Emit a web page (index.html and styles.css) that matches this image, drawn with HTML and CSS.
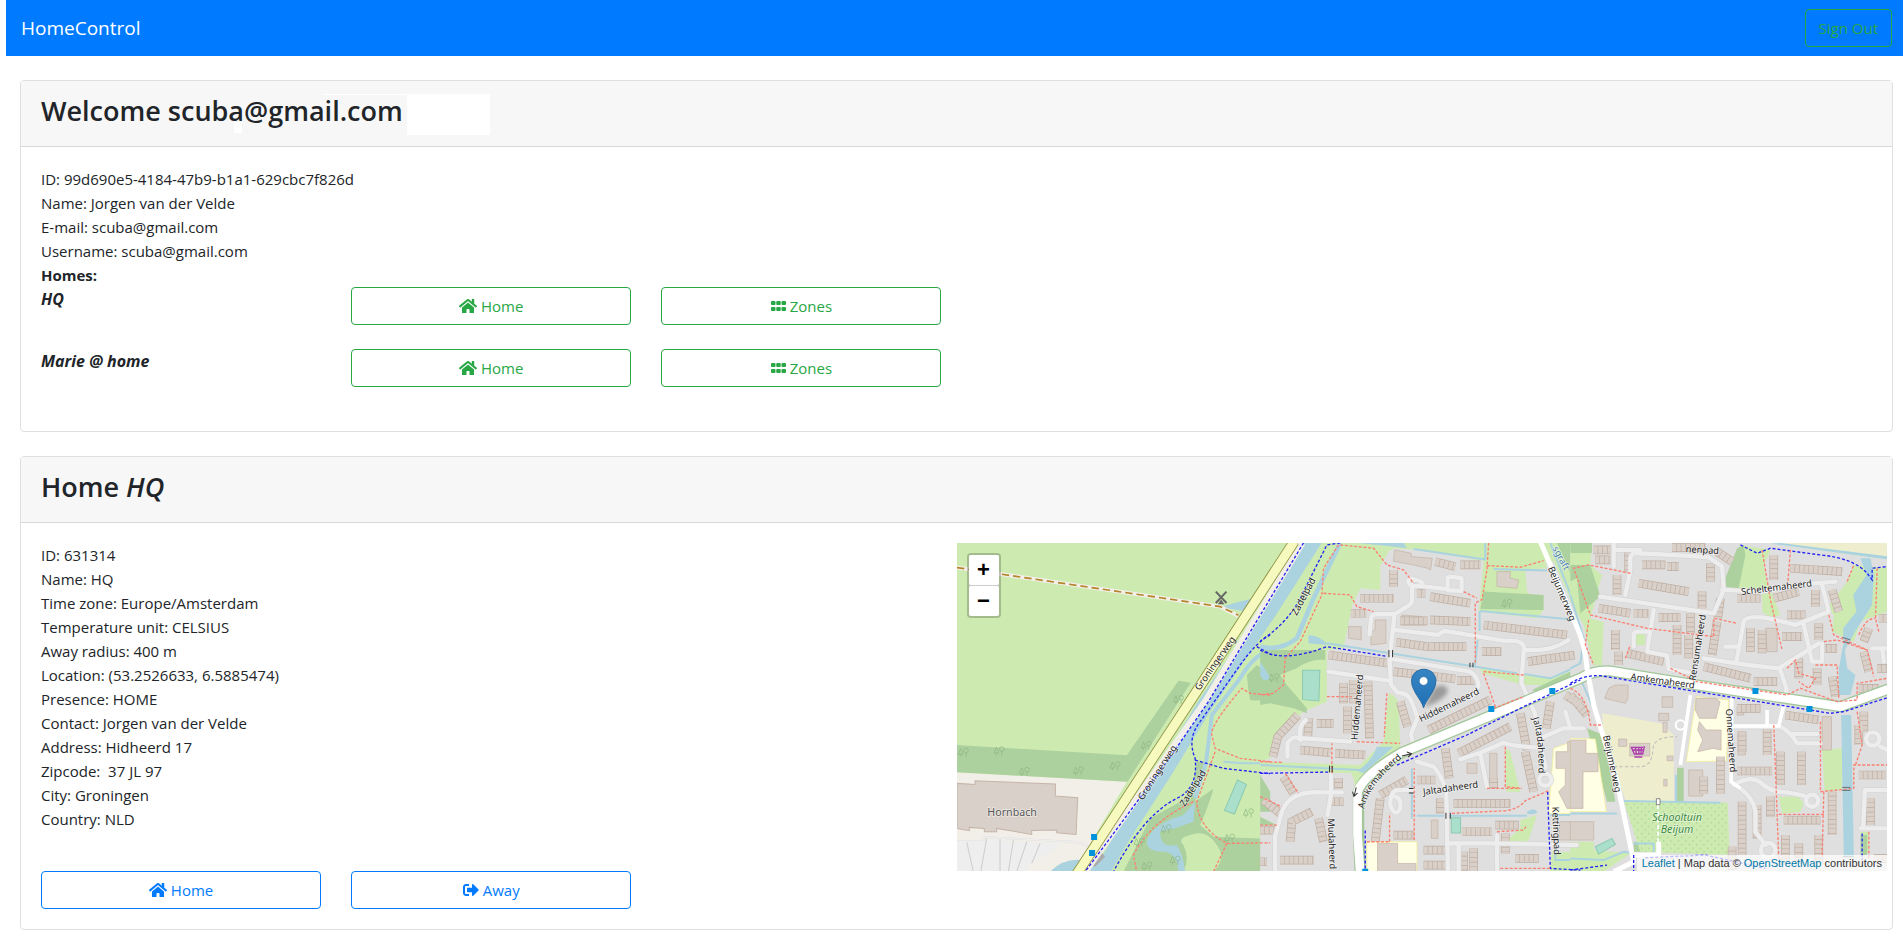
FILE: index.html
```
<!DOCTYPE html>
<html lang="en">
<head>
<meta charset="utf-8">
<title>HomeControl</title>
<link rel="stylesheet" href="styles.css">
</head>
<body>
<svg class="sprite" aria-hidden="true">
  <symbol id="i-home" viewBox="0 0 576 512"><path d="M280.37 148.26L96 300.11V464a16 16 0 0 0 16 16l112.06-.29a16 16 0 0 0 15.92-16V368a16 16 0 0 1 16-16h64a16 16 0 0 1 16 16v95.64a16 16 0 0 0 16 16.05L464 480a16 16 0 0 0 16-16V300L295.67 148.26a12.19 12.19 0 0 0-15.3 0zM571.6 251.47L488 182.56V44.05a12 12 0 0 0-12-12h-56a12 12 0 0 0-12 12v72.61L318.47 43a48 48 0 0 0-61 0L4.34 251.47a12 12 0 0 0-1.6 16.9l25.5 31A12 12 0 0 0 45.15 301l235.22-193.74a12.19 12.19 0 0 1 15.3 0L530.9 301a12 12 0 0 0 16.9-1.6l25.5-31a12 12 0 0 0-1.7-16.93z"/></symbol>
  <symbol id="i-grid" viewBox="0 0 15 16"><path d="M1 3h2.500a1 1 0 0 1 1 1v2a1 1 0 0 1-1 1H1a1 1 0 0 1-1-1V4a1 1 0 0 1 1-1zm5.250 0h2.500a1 1 0 0 1 1 1v2a1 1 0 0 1-1 1h-2.500a1 1 0 0 1-1-1V4a1 1 0 0 1 1-1zm5.250 0H14a1 1 0 0 1 1 1v2a1 1 0 0 1-1 1h-2.500a1 1 0 0 1-1-1V4a1 1 0 0 1 1-1zM1 9h2.500a1 1 0 0 1 1 1v2a1 1 0 0 1-1 1H1a1 1 0 0 1-1-1v-2a1 1 0 0 1 1-1zm5.250 0h2.500a1 1 0 0 1 1 1v2a1 1 0 0 1-1 1h-2.500a1 1 0 0 1-1-1v-2a1 1 0 0 1 1-1zm5.250 0H14a1 1 0 0 1 1 1v2a1 1 0 0 1-1 1h-2.500a1 1 0 0 1-1-1v-2a1 1 0 0 1 1-1z"/></symbol>
  <symbol id="i-away" viewBox="0 0 512 512"><path d="M497 273L329 441c-15 15-41 4.500-41-17v-96H152c-13.300 0-24-10.700-24-24v-96c0-13.300 10.700-24 24-24h136V88c0-21.400 25.900-32 41-17l168 168c9.300 9.400 9.300 24.600 0 34zM192 436v-40c0-6.600-5.400-12-12-12H96c-17.700 0-32-14.300-32-32V160c0-17.700 14.300-32 32-32h84c6.600 0 12-5.400 12-12V76c0-6.600-5.400-12-12-12H96c-53 0-96 43-96 96v192c0 53 43 96 96 96h84c6.600 0 12-5.400 12-12z"/></symbol>
</svg>

<nav class="navbar">
  <a class="brand" href="#">HomeControl</a>
  <button class="btn btn-green sign-out" type="button">Sign Out</button>
</nav>

<main class="content">
  <section class="card">
    <header class="card-header">
      <span class="mask"></span><span class="mask-line"></span><span class="mask-dot"></span>
      <h3>Welcome scuba@gmail.com</h3>
    </header>
    <div class="card-body">
      <div>ID: 99d690e5-4184-47b9-b1a1-629cbc7f826d</div>
      <div>Name: Jorgen van der Velde</div>
      <div>E-mail: scuba@gmail.com</div>
      <div>Username: scuba@gmail.com</div>
      <div><b>Homes:</b></div>
      <div class="row spaced">
        <b class="col2 home-name"><i>HQ</i></b>
        <div class="col2"><button class="btn btn-green block" type="button"><svg class="icon wide"><use href="#i-home"/></svg> Home</button></div>
        <div class="col2"><button class="btn btn-green block" type="button"><svg class="icon grid"><use href="#i-grid"/></svg> Zones</button></div>
      </div>
      <div class="row spaced">
        <b class="col2 home-name"><i>Marie @ home</i></b>
        <div class="col2"><button class="btn btn-green block" type="button"><svg class="icon wide"><use href="#i-home"/></svg> Home</button></div>
        <div class="col2"><button class="btn btn-green block" type="button"><svg class="icon grid"><use href="#i-grid"/></svg> Zones</button></div>
      </div>
    </div>
  </section>

  <section class="card">
    <header class="card-header"><h3>Home <i>HQ</i></h3></header>
    <div class="card-body">
      <div class="row">
        <div class="col6">
          <div>ID: 631314</div>
          <div>Name: HQ</div>
          <div>Time zone: Europe/Amsterdam</div>
          <div>Temperature unit: CELSIUS</div>
          <div>Away radius: 400 m</div>
          <div>Location: (53.2526633, 6.5885474)</div>
          <div>Presence: HOME</div>
          <div>Contact: Jorgen van der Velde</div>
          <div>Address: Hidheerd 17</div>
          <div>Zipcode: &nbsp;37 JL 97</div>
          <div>City: Groningen</div>
          <div>Country: NLD</div>
        </div>
        <div class="map">
          <svg class="tiles" viewBox="0 0 2790 984" preserveAspectRatio="xMidYMid slice" role="img" aria-label="Map of Beijum, Groningen">
            <defs>
              <pattern id="dots" width="22" height="22" patternUnits="userSpaceOnUse"><circle cx="5" cy="5" r="1.500" fill="#6fae5a"/><circle cx="16" cy="16" r="1.500" fill="#6fae5a"/></pattern>
              <linearGradient id="pin" x1="0" y1="0" x2="0" y2="1"><stop offset="0" stop-color="#3686c4"/><stop offset="1" stop-color="#1f6fb5"/></linearGradient>
              <g id="tree" fill="none" stroke="#8db382" stroke-width="2"><path d="M0 20L7 2L14 20ZM7 20v7M23 15v12"/><circle cx="23" cy="8" r="7"/></g>
              <g id="roads">
                <g class="west"><path d="M21 918h80v-12l230 12q60 0 80 14" stroke-width="5"/></g>
                <g class="mid">
                  <path d="M465 135q-25-12-20 10q5 12 40 8q5-15-20-18M455 150v48q0 10-20 20l-32 20h-55q-15 0-16 15l-4 45M470 152l85 10M562 130q0-5 10-5l32 5v38l-42-2ZM403 238l-15 135l4 75l20 25q35 0 45 35l15 40l-20 50l10 40M403 285l130 15l20-12l180 30q55-5 58 20l-8 105l40 90l15 85l18 80M205 410l180 27M392 372l215 34q40 0 48 45l-22 38M795 345q80 5 130-30M82 665v-40q20-30 40-10q-10-40 15-60M130 610l140 10M470 680l50 15q20 20 38 70l5 240M600 673l60-20l70-30q20 10 100 15M660 655l20 100M460 765h-50q-20 5-20 45q15 40 30 10q5-30-15-35M245 772h-60q-100-5-120 60l-20 70v110M212 720v60l-10 60M560 925h150l240 5M595 930v80M710 900v110M850 605l60-25h60M915 530l15 50"/>
                  <circle cx="855" cy="734" r="18" fill="none"/>
                </g>
                <g class="east">
                  <path d="M130 25v70M90 185l340 50l30-70l-5-70l-40-28l-60-4l-150-8q-25-5-25 20v30l-15 75M130 45h80M250 225l-20 125l60 12l5 40l60 10M190 335v-35q0-10 15-10h25M455 165l120 5l100-20l120-10M755 150l20 80l-100 40l-80-20q-70-10-75 10l-22 120M400 370l130 20l95 10l120-75M465 335h35M700 270l25 110h30v-55M628 400l20 60l-4 40M480 575h150q30 15 50 50h70M665 597h75M490 750q50-30 80-8q30 30 80 30l50 10M510 760q40 30 45 70v60l30 40M870 880h80M878 880l5-115h70M905 340h50M935 340l5 40M930 635l22 10"/>
                  <circle cx="593" cy="945" r="22" fill="none"/><circle cx="725" cy="797" r="18" fill="none"/><circle cx="907" cy="612" r="20" fill="none"/>
                </g>
              </g>
              <g id="houses">
                <g class="mid">
                  <path d="M300 190h100M272 235h46M420 258h82M510 255l120 5M408 322l102 14M510 335h108M205 360l180 25M400 410l90 10M490 420l95 12M590 437h52M670 270l250 30M665 350h58M803 380l140-20M250 445v60M280 435v70M323 440l5 170M262 515v80M38 665l15-60l60-65M120 645l90 8M225 655l90 5M145 550l-2 55M170 565h50M505 585l185-90M420 500l22 75M595 655l155-80M555 640l12 90M780 535l20 110M870 500l-12 80M915 480l50 30M470 735h55M360 780l80-45M345 920l15-130M580 805h170M605 890h90M705 870h70M490 945h65M490 990h65M610 950v60M640 940v70M735 895v60M765 970h70M90 920l5-60l60-30M175 850l15 70M60 975h100M0 980h20M70 725l30 50M10 795l50 40M0 885h45M400 900h60M795 650l25 120M470 175h25M510 185l120 20M600 90h60M525 80l60 15M400 105v50M540 790v45M700 730v30M235 730v30M210 800h40"/>
                </g>
                <g class="east">
                  <path d="M70 45h50M75 75h45M175 50v60M140 120v60M215 90h70M290 95h35M205 145l150 25M85 220l95 15M190 235h45M265 248h65M360 235v60M395 170v50M420 85v55M450 190l-8 60M440 260l-15 100M355 300v70M320 270v90M135 285v60M145 350v40M170 355l110 25M400 395l140 35M550 440h70M660 100l155 10M610 60v75M610 190l75-20M650 240h55M735 165v50M785 165l20 65M500 190h70M540 280v70M575 285v70M635 305h60M745 265v50M755 340h45M685 370v60M740 400v50M785 425l10 60M500 520h70M645 540l100 15M515 590v60M590 580v80M630 650v100M693 650v100M500 708h105M400 725v50M450 665v110M515 800v160M560 810v100M600 785v60M485 935v70M640 855h110M645 900v90M685 925v60M745 900v90M785 770v130M865 720h80M900 790v80M880 530v60M865 570v60M895 280l-15 40M880 350l15 60M865 460h60M0 480l50 60M440 50l45 30M305 38h100M925 250h28M920 400h30M910 970h40"/>
                </g>
              </g>
            </defs>

            <rect width="2790" height="984" fill="#cdebb0"/>

            <g class="west">
              <path fill="#f2efe9" d="M21 712L530 740L370 1010H21Z"/>
              <path fill="#eee" d="M21 925L100 915L330 925L300 955Q240 970 230 1010H21Z"/>
              <path fill="#add19e" d="M21 630L530 661L685 437L722 443L532 740L21 712ZM890 420L920 390L935 400Q960 380 965 350V490Q930 500 900 495L895 465Z"/>
              <path fill="#aad3df" d="M300 1010Q350 960 420 980L450 950L480 1010Z"/>
              <path class="bank" d="M1100 4L960 225L765 510L640 715L520 900L450 1020"/>
              <path fill="#add19e" d="M740 680h25l-8 30L735 800L790 760Q780 800 750 870L790 905L930 910V860L960 870V1010H520L600 850L690 800Q730 770 735 710Z"/>
              <path fill="#cdebb0" d="M700 930Q680 910 720 900Q770 880 800 930Q830 970 790 1010H700Q720 970 700 930Z"/>
              <path fill="#aad3df" d="M590 920Q600 870 700 840L735 800L730 860Q680 880 630 890Q630 940 680 930Q700 960 705 1010H685Q680 950 640 950Q590 950 590 920ZM850 205l70-18l-35 42l-75-12Z"/>
              <path class="water thin" d="M820 680l60 5h80"/>
              <path class="water stream" d="M960 345Q910 360 870 430L785 540L768 680L735 790"/>
              <path fill="#d9d0c9" stroke="#c5b5a8" stroke-width="3" d="M21 745L75 748V737L316 747V783L383 788L378 898L320 893V885L245 886V898L140 880V890H103V880L58 877V887L21 880Z"/>
              <path fill="#aae0cb" stroke="#8cc9b0" stroke-width="3" d="M862 735L889 748L853 837L823 826Z"/>
              <path class="hatch" d="M50 920l20 90M110 910l-18 100M150 910v100M190 915l-15 95M230 920l-30 90M270 925l-25 60"/>
              <path fill="#aaa" d="M450 945l15 20l-30 30l-25-10Z"/>
            </g>

            <g class="mid">
              <path fill="#dfdfdf" d="M385 50L400 40L480 45L680 80L880 80L960 260V1010H0V680L30 670L45 600L130 530L200 500V345L250 340L275 215L300 160L360 165V95Z"/>
              <path fill="#cdebb0" d="M665 24H840L860 100L795 105L800 170L850 225L830 250L655 230L670 80ZM385 475L400 480L415 500L420 640L460 650L290 770L275 715L0 705V680L300 690L370 620ZM735 640L750 650L780 770H738ZM780 855L830 840L800 930L735 920L780 880ZM660 400L790 420L870 430L960 400V410L880 450L790 450L665 415ZM330 925H352V1010H320ZM875 950H960V1010H870Z"/>
              <path fill="#add19e" d="M670 170L850 180V225L660 222ZM0 345H195V375Q150 370 110 400L60 420L80 450L140 520V535L100 520L30 505L0 510ZM890 24h70v130l-30-40ZM0 720l30 50v60H0ZM0 845l50 25H0ZM510 600L680 530L690 535L530 610ZM815 465l145-70v15l-130 65Z"/>
              <path fill="#ffffe5" stroke="#f4f08e" stroke-width="2" d="M320 920h150v90H320ZM880 640L960 612V835H865Z"/>
              <path class="water mid-w" d="M240 24L160 190L110 310Q60 350 0 335"/>
              <path fill="#aad3df" d="M145 300q30 0 60 30l-60-5ZM350 635h50l-90 80l-20-8q40-20 60-72ZM800 830q20-15 32 0q-10 12-32 5ZM0 380l20 30l10 20q-20 15-30-10ZM290 24h140l10 15Z"/>
              <path class="water thin" d="M200 325L770 415M460 42l215 32V24M700 102l160 5M660 228l300 28M658 228v60M652 315l-8 80M0 690l300 15M470 842h330M780 415l90 15l90-40M870 24l90 230M455 700v150M885 930v45h75M870 840h90"/>
              <path fill="#aae0cb" stroke="#8cc9b0" stroke-width="3" d="M127 406h52l-3 92l-49-4ZM573 848h28v46h-28Z"/>
              <g class="bldg"><path d="M403 45l50 10v10l63 5l-5 35l-12-6l-45-10l-54-10ZM710 110h40v20l25 5l-5 25l-60-5ZM345 255h32v70l-45 5v-40l13-5ZM265 275h38v40l-38-5ZM352 925h60v60h55v25H352ZM887 650h35v-30h38v200h-40l-25-50l20-20v-50h-28ZM896 860h64v55h-64ZM620 685h30v30h-30ZM688 655h22v80h-22ZM513 855h20v55h-20ZM425 240l60 5l10 25h-70Z"/></g>
            </g>

            <g class="east">
              <path fill="#dfdfdf" d="M0 24H951V1010H0Z"/>
              <path fill="#cdebb0" d="M0 24H65L60 90L95 120L60 250L100 262L95 392L68 390L40 270L0 200ZM510 30L600 45L580 90L590 140L630 240L600 250L575 230V170L455 155L500 60ZM850 90L951 100V230L870 260L850 320L785 290L790 240L770 220L830 140ZM190 295h34v35h-34ZM755 645L815 640V765L762 768ZM625 785h60l15 20l-10 25l-55 5ZM870 890h25v60h-20ZM0 920h70v25L180 955L100 1010H0Z"/>
              <path fill="#eeeecf" d="M590 24H951V75ZM95 535L270 565L310 600V800L165 795L100 610Z"/>
              <path fill="#add19e" d="M0 90h60l30 95l-60 50L20 130L0 140ZM500 40l20-10l5 30l-20 100l-50-5ZM0 24h65v30H0ZM50 580l50 20l35 200h-25ZM320 698h20v100h-20ZM190 920h70v30h-70ZM870 900h20v60h-20ZM105 396L380 440V450L105 405ZM400 455L560 465V475L400 470ZM670 485L810 500L951 455V465L810 512L670 498Z"/>
              <path fill="#ffffe5" stroke="#f4f08e" stroke-width="2" d="M378 485L475 495L468 678L348 680ZM0 610L75 612L108 830H0Z"/>
              <path fill="#cdebb0" d="M160 798L472 803L478 960L210 950Z"/><path fill="url(#dots)" d="M160 798L472 803L478 960L210 950Z"/>
              <path fill="#aad3df" d="M870 70h30l10 50l-5 90l-45 70l-40 70l-2-70l40-50l-10-50l40-60ZM820 320l10 80l25 20l-15 60h-35v-80ZM812 540h30l8 425h-30ZM630 24l320 40v10L600 26Z"/>
              <path class="water thin" d="M30 430L95 580L190 960M160 798l290 5M317 720v80M0 180L40 310L30 385L0 400M0 835h140M190 925l60 0v25M0 970l100 5l60-25l30 5"/>
              <g class="bldg"><path d="M115 460l20-10h38v40l-8 15l-62-15ZM275 485h32v32h-32ZM145 612h24v22h-24ZM178 625h60v38h-60ZM355 705h42v78h-42ZM377 490l60 0l12 10l-12 50h-50l-12-25ZM387 560l20 25h45v60l-25-5l-45 10l15-35l-15-30ZM755 545h28v100h-28ZM585 280h35v70h-30ZM0 615h47v40h36v55h-45v110H0ZM0 860h70v55H0ZM265 535h30v22h-30ZM278 562h12v30h-12ZM290 663h18v14h-18ZM280 733h10v20h-10ZM503 590h22v70h-22ZM500 515h20v25h-20Z"/></g>
              <path fill="#aae0cb" stroke="#8cc9b0" stroke-width="3" d="M75 935L125 910L135 928L85 957Z"/>
            </g>

            <use href="#houses" class="houses-edge"/>
            <use href="#houses" class="houses-fill"/>
            <use href="#roads" class="road-edge"/>
            <use href="#roads" class="road-fill"/>

            <g class="mid big-roads">
              <path class="case" d="M300 1010L295 900V770Q310 720 420 655L960 430Q1000 405 1050 408L1310 450L1740 515L1890 460"/>
              <path class="major" d="M300 1010L292 900V770Q310 720 420 655L960 430Q1000 405 1050 408L1310 450L1740 515L1890 460"/>
              <path class="major slim" d="M840 20L945 265Q975 330 980 400L1000 510L1070 740L1120 980L1060 1010M1120 960L1195 960V920"/>
              <path class="major small" d="M1414 490L1412 740L1440 760M1410 573H1555L1570 510M1520 525v45M1290 480L1260 690"/>
              <circle cx="1260" cy="570" r="14" fill="#dfdfdf" stroke="#fff" stroke-width="6"/>
            </g>
            <g class="west">
              <path d="M21 98L810 215L865 243" fill="none" stroke="#f2efe9" stroke-width="12"/>
              <path d="M21 98L810 215L865 241" fill="none" stroke="#b5852b" stroke-width="5" stroke-dasharray="22 12"/>
              <path d="M1056 24L765 500L405 1010" fill="none" stroke="#f2efe9" stroke-width="20"/>
              <path class="sec-case" d="M1032 20L752 450L378 1020"/>
              <path class="sec" d="M1032 20L752 450L378 1020"/>
            </g>

            <g class="cycle">
              <path class="west" d="M1060 24L775 500L650 680L405 1010M960 300Q920 320 870 390L750 560Q710 610 735 670Q745 760 680 790Q580 840 490 1010M735 675L820 700L960 716M920 335l45 25"/>
              <path class="mid" d="M240 24L200 30L130 170Q90 260 0 318M0 345Q70 385 200 335L380 364M0 715L210 711M315 1000V880M410 690L620 600L790 515L960 435M862 770L870 1000L960 1005"/>
              <path class="east" d="M0 445Q40 420 90 422L350 465L780 535L820 530L951 488M510 30l50 25l40-15l150 20q100 10 140 55l15 20V100l45-5M0 1005l110-15M190 960v50M225 968l180-8l180 40M875 895v80"/>
            </g>
            <g class="foot">
              <path class="west" d="M960 480L900 475L875 460Q780 570 785 600L795 640L870 670L960 680M795 650L740 800Q745 880 830 925L960 923M730 800Q600 860 550 960L560 1010M830 925L790 1010"/>
              <path class="mid" d="M235 30L190 100L185 180L120 320L75 370L70 450L40 475L0 480M240 30l100 10l40 50l50 15l30 40M190 175l80 5l20 35l50 15M685 24l-5 80l-15 90l-20 10v180M680 92l100 5l70-20M610 170l40 20M0 680l70 2M215 715v-90M380 475l-8 130M290 620l130 5M200 485h75M75 715l40 60M0 785l65 30M0 870h50M735 635v120l50 5M680 760h100M575 835l160-8q40-5 60-30l70-30M388 920v-85M320 920h70M462 915V700M670 410l120 10M670 415l35 100M700 520l90-35M710 890l80-5l10-15M720 1000h150"/>
              <path class="east" d="M180 115L55 90L10 100L60 240L230 280L430 305V250L500 265M55 255L45 330L70 390M575 45l25 150l35 150M660 45l-8 100M775 240l15 60L890 345l20 80M830 140l20-50M890 345l-90-30l-40 5M865 300q20-50 50-50M920 100l-5 150l10 40M0 460q50 20 60 110h35M300 400l80 40L650 480L690 460L800 500L860 495V445L951 430M650 400l25-25l10 40l50 15l-20 30l-30-20M735 390h65l5 100M750 560v210M610 570l15 400M760 770l-5 190M625 838h140M750 770l100-10v-70h100M860 530l15 100l-20 60M895 890v80M165 370l15-40"/>
            </g>

            <g class="stops">
              <path class="west" d="M423 897h18v18h-18ZM417 945h18v18h-18Z"/>
              <path class="mid" d="M684 513h18v18h-18ZM867 459h18v18h-18ZM306 1001h18v18h-18Z"/>
              <path class="east" d="M546 459h18v18h-18ZM708 513h18v18h-18Z"/>
            </g>
            <g class="mid gates"><path d="M386 345v22M397 345v22M557 833v18M570 833v18M446 760h14M446 774h14M208 692v20M216 692v20M629 383v14M638 383v14"/><path d="M425 663l25-6m-10-6l14 5l-10 10M288 757l-6 25m-5-12l4 14l11-10" fill="none"/></g>
            <g class="east"><path d="M130 695H210Q245 695 248 640Q250 605 320 605" fill="none" stroke="#bbb" stroke-width="3" stroke-dasharray="10 7"/><path d="M263 810v110" stroke="#fff" stroke-width="5" stroke-dasharray="12 8"/><path d="M258 791h11v18h-11Z" fill="#fff" stroke="#555" stroke-width="2"/><path d="M222 633l-5 24h-25l-9-20h35M186 645h32M195 637l3 20M205 637l1 20M213 637l-1 20M192 666h24" fill="none" stroke="#ac39ac" stroke-width="4"/><path d="M815 307l25 8M818 320l22 5M815 757h25M815 766h25M817 965h32" fill="none" stroke="#444" stroke-width="2"/></g>
            <g class="west"><path d="M797 170l32 34M829 170l-32 34" stroke="#666" stroke-width="6"/><path d="M803 208l10-14l10 14Z" fill="#666"/>
              <use href="#tree" x="25" y="638"/><use href="#tree" x="132" y="634"/><use href="#tree" x="208" y="696"/><use href="#tree" x="370" y="694"/><use href="#tree" x="480" y="679"/><use href="#tree" x="670" y="480"/><use href="#tree" x="573" y="618"/><use href="#tree" x="633" y="868"/><use href="#tree" x="552" y="908"/><use href="#tree" x="823" y="896"/><use href="#tree" x="575" y="980"/><use href="#tree" x="660" y="962"/><use href="#tree" x="880" y="820"/><use href="#tree" x="1655" y="192"/><use href="#tree" x="957" y="415"/></g>

            <g class="labels">
              <g class="west">
                <text class="place" x="112" y="843">Hornbach</text>
                <text transform="translate(748 468) rotate(-55)">Groningerweg</text>
                <text transform="translate(578 797) rotate(-57)">Groningerweg</text>
                <text transform="translate(704 816) rotate(-58)">Zadelpad</text>
              </g>
              <g class="mid">
                <path id="p-amk" d="M312 822Q325 750 425 670" fill="none" stroke="none"/>
                <path id="p-jal" d="M816 550Q838 610 834 730" fill="none" stroke="none"/>
                <text transform="translate(110 243) rotate(-62)">Zadelpad</text>
                <text transform="translate(292 616) rotate(-85)">Hiddemaheerd</text>
                <text transform="translate(482 562) rotate(-26)">Hiddemaheerd</text>
                <text><textPath href="#p-amk">Amkemaheerd</textPath></text>
                <text transform="translate(490 780) rotate(-8)">Jaltadaheerd</text>
                <text><textPath href="#p-jal">Jaltadaheerd</textPath></text>
                <text transform="translate(203 850) rotate(88)">Mudaheerd</text>
                <text transform="translate(876 815) rotate(88)">Kettingpad</text>
                <text transform="translate(862 100) rotate(67)">Beijumerweg</text>
                <text class="river" transform="translate(876 40) rotate(62)">sgraft</text>
              </g>
              <g class="east">
                <text transform="translate(180 434) rotate(8)">Amkemaheerd</text>
                <text transform="translate(375 438) rotate(-81)">Rensumaheerd</text>
                <text transform="translate(513 180) rotate(-7)">Scheltemaheerd</text>
                <text transform="translate(466 522) rotate(86)">Onnemaheerd</text>
                <text transform="translate(98 603) rotate(78)">Beijumerweg</text>
                <text transform="translate(345 52) rotate(3)">nenpad</text>
                <text class="garden" x="320" y="857">Schooltuin</text>
                <text class="garden" x="320" y="893">Beijum</text>
              </g>
            </g>

            <g class="mid">
              <path class="shadow" d="M492 518L520 460Q550 440 562 462Q565 480 530 500Z"/>
              <path d="M490 519C486 495 454 470 454 439A36.500 36.500 0 0 1 527 439C527 470 494 495 490 519Z" fill="url(#pin)" stroke="#2b6ea8" stroke-width="3"/>
              <circle cx="490" cy="438" r="13" fill="#fff" stroke="#2b6ea8" stroke-width="2"/>
            </g>
          </svg>
          <div class="zoom">
            <button type="button" aria-label="Zoom in">+</button>
            <button type="button" aria-label="Zoom out">−</button>
          </div>
          <div class="credit"><a href="#">Leaflet</a> | Map data © <a href="#">OpenStreetMap</a> contributors</div>
        </div>
      </div>
      <div class="row">
        <div class="col2"><button class="btn btn-blue block" type="button"><svg class="icon wide"><use href="#i-home"/></svg> Home</button></div>
        <div class="col2"><button class="btn btn-blue block" type="button"><svg class="icon"><use href="#i-away"/></svg> Away</button></div>
      </div>
    </div>
  </section>
</main>
</body>
</html>
```
FILE: styles.css
```
* { box-sizing: border-box; }
body {
  margin: 0 0 0 6px;
  background: #fff;
  color: #212529;
  font: 15px/24px "Open Sans", "Noto Sans", sans-serif;
}
.sprite { display: none; }

.navbar {
  display: flex;
  align-items: center;
  justify-content: space-between;
  padding: 9px 11px 9px 15px;
  background: #007bff;
}
.brand { color: #fff; font-size: 19px; line-height: 32px; text-decoration: none; }

.btn {
  height: 38px;
  padding: 0 12px;
  border: 1px solid;
  border-radius: 4px;
  background: transparent;
  font: inherit;
  cursor: pointer;
}
.btn-green { color: #28a745; border-color: #28a745; }
.btn-blue { color: #007bff; border-color: #007bff; }
.sign-out { padding: 0 13px; }
.block { display: block; width: 100%; }
.icon { width: 16px; height: 16px; fill: currentColor; vertical-align: -2px; }
.wide { width: 18px; }
.grid { width: 15px; }

.content { display: grid; gap: 24px; padding: 24px 10px 11px 14px; }
.card { border: 1px solid #dfdfdf; border-radius: 4px; min-width: 0; }
.card-header {
  position: relative;
  padding: 12px 20px 17px;
  border-bottom: 1px solid #d9d9d9;
  background: #f7f7f7;
}
h3 { position: relative; margin: 0; font-size: 27px; font-weight: 600; line-height: 36px; }
.mask, .mask-line, .mask-dot { position: absolute; background: #fff; }
.mask { left: 386px; top: 13px; width: 83px; height: 41px; }
.mask-line { left: 302px; top: 13px; width: 84px; height: 1px; }
.mask-dot { left: 213px; top: 41px; width: 8px; height: 11px; }

.card-body { padding: 20px; }
.row { display: flex; margin: 0 -15px; }
.spaced { margin-bottom: 24px; }
.col2 { flex: 0 0 auto; width: calc(100% / 6); padding: 0 15px; }
.col6 { flex: 0 0 auto; width: 50%; padding: 0 15px; }
.home-name { font-size: 16px; }

.map { position: relative; flex: 1; height: 328px; overflow: hidden; background: #ddd; }
.tiles { display: block; width: 100%; height: 100%; }
.zoom {
  position: absolute;
  left: 10px;
  top: 10px;
  display: grid;
  gap: 1px;
  border: 2px solid rgba(0, 0, 0, .2);
  border-radius: 4px;
  background: #ccc;
  background-clip: padding-box;
}
.zoom button {
  width: 30px;
  height: 30px;
  padding: 0;
  border: 0;
  border-radius: 2px;
  background: #fff;
  color: #000;
  font: bold 22px/30px "Liberation Sans", sans-serif;
}
.credit {
  position: absolute;
  right: 0;
  bottom: 0;
  padding: 0 5px;
  background: rgba(255, 255, 255, .7);
  color: #333;
  font: 11px/16px "Liberation Sans", sans-serif;
}
.credit a { color: #0078a8; text-decoration: none; }

.west { transform: translate(-21px, -24px); }
.mid { transform: translate(909px, -24px); }
.east { transform: translate(1839px, -24px); }
.water, .bank { fill: none; stroke: #aad3df; stroke-linejoin: round; }
.bank { stroke-width: 46px; }
.mid-w { stroke-width: 14px; }
.stream { stroke-width: 12px; }
.thin { stroke-width: 6px; }
.hatch { fill: none; stroke: #ccc; stroke-width: 3px; }
.bldg { fill: #d9d0c9; stroke: #c2b1a3; stroke-width: 2px; }
.houses-edge { fill: none; stroke: #bfada0; stroke-width: 26px; }
.houses-fill { fill: none; stroke: #d9d0c9; stroke-width: 22px; stroke-dasharray: 12px 2px; }
.road-edge { fill: none; stroke: #d4d2d2; stroke-width: 16px; stroke-linejoin: round; stroke-linecap: round; }
.road-fill { fill: none; stroke: #ededed; stroke-width: 13px; stroke-linejoin: round; stroke-linecap: round; }
.big-roads path { fill: none; stroke-linejoin: round; }
.case { stroke: #a3c79a; stroke-width: 34px; }
.major { stroke: #fff; stroke-width: 26px; }
.big-roads .slim { stroke-width: 15px; }
.big-roads .small { stroke-width: 11px; }
.sec-case { fill: none; stroke: #8f9140; stroke-width: 32px; }
.sec { fill: none; stroke: #f7fabf; stroke-width: 27px; }
.cycle { fill: none; stroke: #2222f5; stroke-width: 4px; stroke-dasharray: 9px 6px; }
.foot { fill: none; stroke: #fa8072; stroke-width: 4px; stroke-dasharray: 9px 5px; }
.stops { fill: #0092da; }
.gates { stroke: #333; stroke-width: 3px; }
.labels text {
  font: 28px "Noto Sans", sans-serif;
  fill: #222;
  stroke: rgba(255, 255, 255, .6);
  stroke-width: 4px;
  paint-order: stroke;
}
.labels .place { font-size: 32px; fill: #555; }
.labels .river { fill: #4d80b3; }
.labels .garden { font-size: 32px; font-style: italic; fill: #3b8a3b; text-anchor: middle; }
.shadow { fill: rgba(0, 0, 0, .3); filter: blur(6px); }
```
